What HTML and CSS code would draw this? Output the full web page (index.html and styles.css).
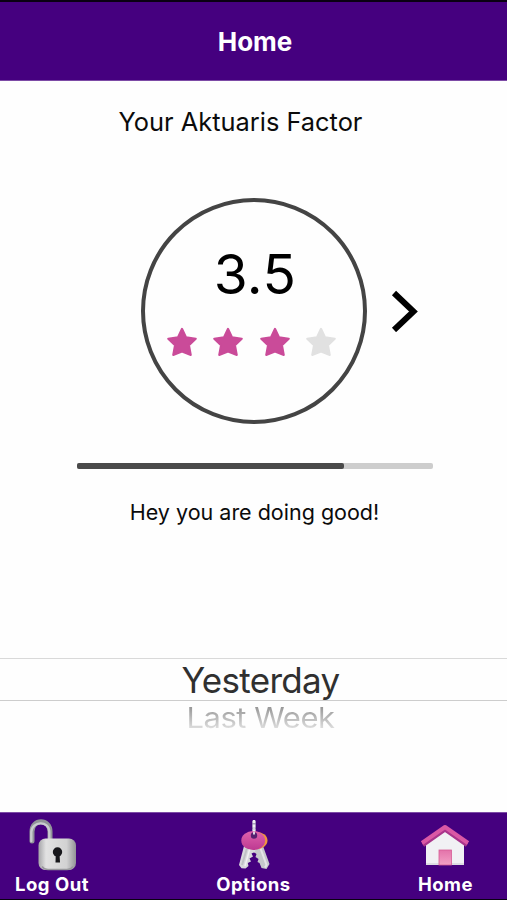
FILE: index.html
```html
<!DOCTYPE html>
<html lang="en">
<head>
<meta charset="utf-8">
<title>Home</title>
<link rel="stylesheet" href="styles.css">
</head>
<body>
<svg width="0" height="0" class="defs" aria-hidden="true">
  <defs>
    <symbol id="star" viewBox="0 0 32 32"><path d="M16 2.8 L20 11.3 L29.8 12.7 L23 19.2 L24.8 29 L16 25.6 L7.2 29 L9 19.2 L2.2 12.7 L12 11.3 Z" fill="currentColor" stroke="currentColor" stroke-width="2" stroke-linejoin="round"/></symbol>
    <linearGradient id="steel" x1="0" x2="1"><stop offset="0" stop-color="#a5a5a8"/><stop offset=".2" stop-color="#e2e2e2"/><stop offset=".75" stop-color="#d2d2d2"/><stop offset="1" stop-color="#929296"/></linearGradient>
    <linearGradient id="pink" x1="0" y1="0" x2="0" y2="1"><stop offset="0" stop-color="#df62ad"/><stop offset="1" stop-color="#bd3991"/></linearGradient>
    <linearGradient id="door" x1="0" y1="0" x2="0" y2="1"><stop offset="0" stop-color="#e373aa"/><stop offset="1" stop-color="#f3a0c5"/></linearGradient>
  </defs>
</svg>
<header class="header"><h1>Home</h1></header>
<main class="content">
  <h2 class="title">Your Aktuaris Factor</h2>
  <section class="score-row">
    <div class="score">
      <div class="value">3.5</div>
      <div class="stars">
        <svg class="star"><use href="#star"/></svg>
        <svg class="star"><use href="#star"/></svg>
        <svg class="star"><use href="#star"/></svg>
        <svg class="star empty"><use href="#star"/></svg>
      </div>
    </div>
    <svg class="next" viewBox="0 0 28 42"><path d="M3 3 L22.5 21.5 L3 40" fill="none" stroke="#000" stroke-width="6"/></svg>
  </section>
  <div class="progress"><div class="bar"></div></div>
  <p class="message">Hey you are doing good!</p>
  <div class="picker">
    <div class="selected"><span>Yesterday</span></div>
    <div class="upcoming"><span>Last Week</span></div>
  </div>
</main>
<nav class="tabs">
  <a class="tab logout">
    <svg class="icon" viewBox="0 0 50 52">
      <path d="M4 22V12.5C4 -.5 22 -.5 22 12.5V24" fill="none" stroke="#919499" stroke-width="5" stroke-linecap="round"/>
      <path d="M3.3 22V13C4 2 21 1 21.3 13V23" fill="none" stroke="#c9cbcf" stroke-width="2.4" stroke-linecap="round"/>
      <rect x="10.5" y="19.5" width="37.5" height="31.5" rx="7" fill="url(#steel)"/>
      <path d="M14 47.5Q16 50.5 20 50.5H39Q43 50.5 45 47.5" fill="none" stroke="#99999d" stroke-width="1.4"/>
      <circle cx="29.5" cy="33" r="4.7" fill="#17171a"/><path d="M27.8 34H31.5L32 43.5H27.5Z" fill="#17171a"/>
    </svg>
    <span>Log Out</span>
  </a>
  <a class="tab options">
    <svg class="icon" viewBox="0 0 50 52">
      <path d="M25 2V18" stroke="#a9a3bd" stroke-width="3.5"/><path d="M25 1V16" stroke="#f0eef5" stroke-width="2.5" stroke-dasharray="3 1.5"/>
      <path d="M24 27L34 27L40.5 45L37.5 50L32.5 49L30.5 44L28.5 43L29.5 40L26.5 38L27.5 35L24.5 33Z" fill="#c6c8cb"/>
      <path d="M31 28L37.5 46L36 48.5" fill="none" stroke="#e5e5e7" stroke-width="2"/>
      <ellipse cx="27" cy="21.5" rx="11.5" ry="8.8" fill="#ef963d"/>
      <path d="M15 27L27 28L26 33L22.5 34.5L24 37.5L20.5 39.5L22 42.5L18.8 44L19.5 47L16.5 49.5L12.5 49.2L10 46Z" fill="#d8d9dc"/>
      <path d="M18 29L13 46" stroke="#bfc1c5" stroke-width="2"/><path d="M21 29L16 47" stroke="#f1f1f2" stroke-width="1.5"/>
      <ellipse cx="24.2" cy="21.5" rx="11.9" ry="9.5" fill="url(#pink)"/>
      <circle cx="25" cy="16.5" r="3.2" fill="#55206f"/><path d="M25 8V16" stroke="#d8d3e3" stroke-width="2" stroke-dasharray="3 1.5"/>
    </svg>
    <span>Options</span>
  </a>
  <a class="tab home">
    <svg class="icon" viewBox="0 0 50 52">
      <path d="M6 23L25 9L44 23V46H6Z" fill="#f1f1f4"/>
      <path d="M6 45H44" stroke="#d6d6dc" stroke-width="1.5"/>
      <path d="M3 26L25 10.5L47 26" fill="none" stroke="#a9358b" stroke-width="4"/>
      <path d="M2 24L25 8L48 24" fill="none" stroke="#da58a5" stroke-width="4" stroke-linejoin="round"/>
      <rect x="19" y="31" width="12.5" height="15" fill="url(#door)" stroke="#d65d96" stroke-width=".8"/>
    </svg>
    <span>Home</span>
  </a>
</nav>
</body>
</html>
```
FILE: styles.css
```css
* { box-sizing: border-box; }
body {
  margin: 0;
  width: 507px;
  height: 900px;
  overflow: hidden;
  display: flex;
  flex-direction: column;
  background: #fefefe;
  color: #0b0b0b;
  font-family: Inter, "Liberation Sans", sans-serif;
}
h1, h2, p { margin: 0; }
.defs { position: absolute; }
.header {
  height: 81px;
  border-top: 2px solid #0a0012;
  border-bottom: 1px solid #7d4ba6;
  background: #45007f;
  color: #fff;
  text-align: center;
}
.header h1 { font-size: 26px; line-height: 80px; font-weight: 700; padding-left: 3px; }
.content { flex: 1; display: flex; flex-direction: column; align-items: center; }
.title {
  margin-top: 26px;
  height: 30px;
  width: 507px;
  padding-right: 26px;
  text-align: center;
  font-size: 25.4px;
  line-height: 30px;
  font-weight: 400;
}
.score-row { display: flex; align-items: center; margin: 61px 0 0 53px; gap: 24px; }
.score {
  width: 226px;
  height: 226px;
  border: 4px solid #444;
  border-radius: 50%;
  display: flex;
  flex-direction: column;
  align-items: center;
}
.value { margin: 42px 0 0 2px; font-size: 55px; line-height: 60px; letter-spacing: .5px; color: #000; }
.stars { display: flex; gap: 14.3px; margin: 22px 0 0 -5px; }
.star { width: 32px; height: 32px; color: #ca4b99; }
.star.empty { color: #e1e1e1; }
.next { width: 28px; height: 42px; }
.progress { margin-top: 39px; margin-left: 2px; width: 356px; height: 6px; border-radius: 2px; background: #cdcdcd; }
.bar { width: 75%; height: 6px; border-radius: 2px; background: #4a4a4a; }
.message { margin-top: 28px; padding-left: 2px; font-size: 21.5px; line-height: 30px; }
.picker { width: 100%; margin-top: 131px; text-align: center; }
.selected {
  height: 43px;
  border-top: 1px solid #d9d9d9;
  border-bottom: 1px solid #cdcdcd;
  font-size: 35px;
  line-height: 43px;
  letter-spacing: -.7px;
  color: #303030;
  padding-left: 14px;
}
.upcoming { height: 32px; font-size: 31px; line-height: 34px; letter-spacing: -.45px; padding-left: 14px; }
.upcoming span {
  display: inline-block;
  transform: scaleY(.9);
  color: transparent;
  background: linear-gradient(#989898 15%, #dedede 85%);
  -webkit-background-clip: text;
  background-clip: text;
}
.tabs {
  height: 88px;
  padding: 0 34px 0 15px;
  display: flex;
  justify-content: space-between;
  background: #45007f;
  border-top: 1px solid #7d4ba6;
  border-bottom: 1px solid #0a0012;
}
.tab { display: flex; flex-direction: column; align-items: center; padding-top: 6px; color: #fff; font-size: 18.5px; line-height: 26px; font-weight: 700; letter-spacing: .5px; }
.icon { width: 50px; height: 52px; }
.logout .icon { margin-left: 2px; }
.options .icon { margin-left: 2px; }
```
